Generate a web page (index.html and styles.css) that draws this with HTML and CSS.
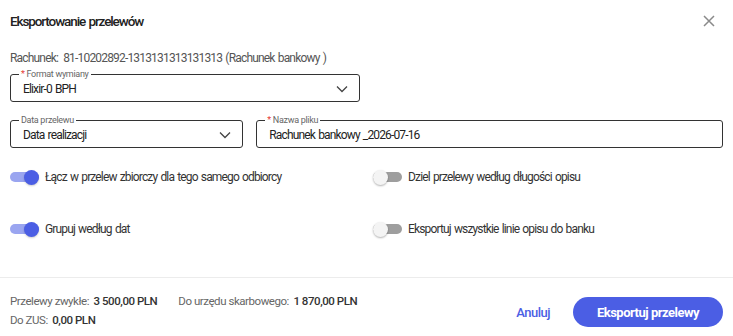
FILE: index.html
```html
<!DOCTYPE html>
<html lang="pl">
<head>
<meta charset="utf-8">
<link rel="stylesheet" href="styles.css">
</head>
<body>
<div class="dialog">
  <header class="dlg-head">
    <h1 class="dlg-title">Eksportowanie przelewów</h1>
    <button class="close" aria-label="Zamknij">
      <svg width="12" height="12" viewBox="0 0 12 12"><path d="M1 1L11 11M11 1L1 11" stroke="#8a8a8a" stroke-width="1.5" fill="none"/></svg>
    </button>
  </header>

  <section class="dlg-body">
    <p class="account"><span class="acc-label">Rachunek:</span> 81-10202892-1313131313131313 (Rachunek bankowy )</p>

    <div class="row half">
      <div class="field">
        <label class="f-label"><span class="req">*</span> Format wymiany</label>
        <div class="f-value">Elixir-0 BPH</div>
        <svg class="chev" width="12" height="8" viewBox="0 0 12 8"><path d="M1 1.5L6 6.5L11 1.5" stroke="#444" stroke-width="1.3" fill="none"/></svg>
      </div>
    </div>

    <div class="row third">
      <div class="field">
        <label class="f-label">Data przelewu</label>
        <div class="f-value">Data realizacji</div>
        <svg class="chev" width="12" height="8" viewBox="0 0 12 8"><path d="M1 1.5L6 6.5L11 1.5" stroke="#444" stroke-width="1.3" fill="none"/></svg>
      </div>
      <div class="field">
        <label class="f-label"><span class="req">*</span> Nazwa pliku</label>
        <div class="f-value">Rachunek bankowy _2026-07-16</div>
      </div>
    </div>

    <div class="toggles">
      <div class="toggle on"><span class="sw"><span class="track"></span><span class="thumb"></span></span><span class="t-text">Łącz w przelew zbiorczy dla tego samego odbiorcy</span></div>
      <div class="toggle"><span class="sw"><span class="track"></span><span class="thumb"></span></span><span class="t-text">Dziel przelewy według długości opisu</span></div>
      <div class="toggle on"><span class="sw"><span class="track"></span><span class="thumb"></span></span><span class="t-text">Grupuj według dat</span></div>
      <div class="toggle"><span class="sw"><span class="track"></span><span class="thumb"></span></span><span class="t-text">Eksportuj wszystkie linie opisu do banku</span></div>
    </div>
  </section>

  <footer class="dlg-foot">
    <div class="sums">
      <div class="sum-line">
        <span class="sum"><span class="s-label">Przelewy zwykłe:</span> <b>3 500,00 PLN</b></span>
        <span class="sum"><span class="s-label">Do urzędu skarbowego:</span> <b>1 870,00 PLN</b></span>
      </div>
      <div class="sum-line">
        <span class="sum"><span class="s-label">Do ZUS:</span> <b>0,00 PLN</b></span>
      </div>
    </div>
    <div class="actions">
      <button class="btn-text">Anuluj</button>
      <button class="btn-primary">Eksportuj przelewy</button>
    </div>
  </footer>
</div>
</body>
</html>
```
FILE: styles.css
```css
* { box-sizing: border-box; }
html, body { margin: 0; padding: 0; background: #fff; }
body { font-family: Roboto, "Noto Sans", sans-serif; color: #222; width: 733px; height: 336px; overflow: hidden; }

.dialog { display: flex; flex-direction: column; height: 336px; }

.dlg-head { display: flex; align-items: center; justify-content: space-between; height: 41px; padding: 0 18px 0 10px; }
.dlg-title { margin: 0; font-size: 13.5px; font-weight: 500; line-height: 20px; color: #222; letter-spacing: -1.1px; word-spacing: 1px; }
.close { border: 0; background: none; padding: 0; width: 12px; height: 12px; display: flex; cursor: pointer; }

.dlg-body { padding: 0 10px; flex: 1; }
.account { margin: 9px 0 0; font-size: 12px; line-height: 16px; color: #555; letter-spacing: -0.82px; word-spacing: 1px; }
.acc-label { margin-right: 2px; }

.row { display: grid; gap: 13px; }
.row.half { grid-template-columns: 1fr 1fr; margin-top: 8px; }
.row.third { grid-template-columns: 1fr 2fr; margin-top: 18px; }

.field { position: relative; height: 28px; border: 1px solid #333; border-radius: 3px; display: flex; align-items: center; padding: 2px 11px 0 12px; }
.f-label { position: absolute; top: -6px; left: 8px; padding: 0 2px; background: #fff; font-size: 9px; line-height: 10px; color: #666; letter-spacing: -0.3px; }
.req { color: #e53935; }
.f-value { flex: 1; font-size: 12px; color: #222; letter-spacing: -0.85px; word-spacing: 1px; }
.chev { flex: none; }

.toggles { display: grid; grid-template-columns: 1fr 1fr; column-gap: 13px; row-gap: 38px; margin-top: 22px; }
.toggle { display: flex; align-items: center; height: 14px; }
.sw { position: relative; width: 29px; height: 14px; flex: none; margin-right: 6px; }
.track { position: absolute; left: 0; right: 0; top: 2px; height: 10px; border-radius: 5px; background: #9e9e9e; }
.thumb { position: absolute; top: 0; left: 0; width: 15px; height: 15px; margin-top: -0.5px; border-radius: 50%; background: #f4f4f4; box-shadow: 0 1px 2px rgba(0,0,0,0.3); }
.toggle.on .track { background: #9aa5f0; }
.toggle.on .thumb { left: auto; right: 0; background: #4b5ee4; box-shadow: 0 1px 2px rgba(0,0,0,0.2); }
.t-text { font-size: 12px; color: #333; letter-spacing: -0.85px; word-spacing: 1px; }

.dlg-foot { border-top: 1px solid #ececec; height: 59px; display: flex; align-items: flex-start; justify-content: space-between; padding: 15px 10px 0; }
.sums { display: flex; flex-direction: column; gap: 3px; font-size: 11.5px; line-height: 16px; letter-spacing: -0.45px; }
.sum-line { display: flex; gap: 21px; }
.s-label { color: #666; margin-right: 2px; }
.sum b { font-weight: 500; color: #333; }

.actions { display: flex; align-items: center; gap: 17px; margin-top: 4px; }
.btn-text { border: 0; background: none; font-family: inherit; font-size: 13px; font-weight: 500; color: #4b5ee4; padding: 6px 6px; cursor: pointer; letter-spacing: -0.5px; }
.btn-primary { border: 0; background: #4b5ee4; color: #fff; font-family: inherit; font-size: 13px; font-weight: 700; height: 30px; width: 150px; border-radius: 15px; cursor: pointer; letter-spacing: -0.5px; }
```
